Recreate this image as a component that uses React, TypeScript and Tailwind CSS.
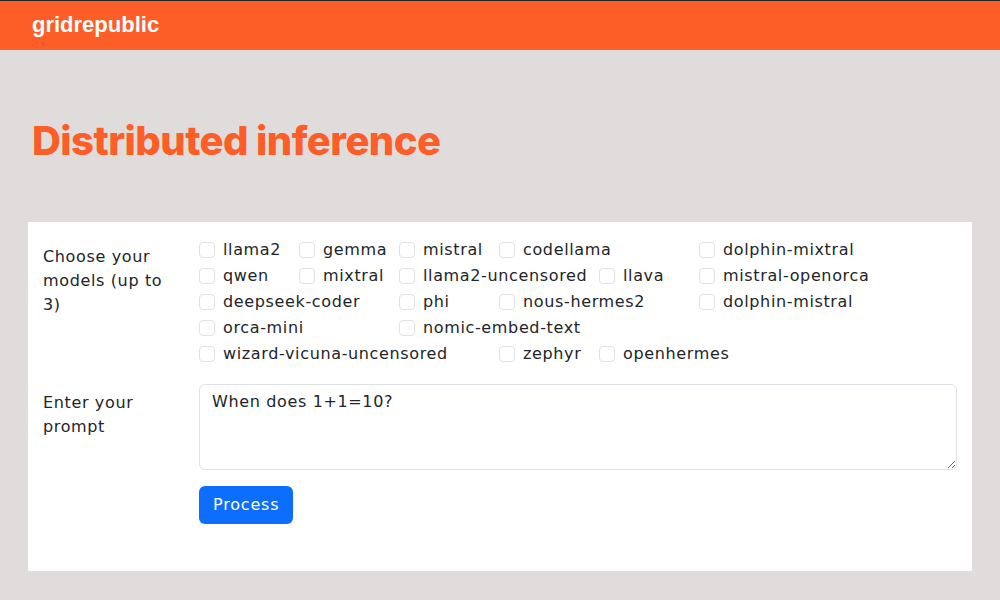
const models: { name: string; span: string }[] = [
  { name: 'llama2', span: 'col-span-1' },
  { name: 'gemma', span: 'col-span-1' },
  { name: 'mistral', span: 'col-span-1' },
  { name: 'codellama', span: 'col-span-2' },
  { name: 'dolphin-mixtral', span: 'col-span-2' },
  { name: 'qwen', span: 'col-span-1' },
  { name: 'mixtral', span: 'col-span-1' },
  { name: 'llama2-uncensored', span: 'col-span-2' },
  { name: 'llava', span: 'col-span-1' },
  { name: 'mistral-openorca', span: 'col-span-2' },
  { name: 'deepseek-coder', span: 'col-span-2' },
  { name: 'phi', span: 'col-span-1' },
  { name: 'nous-hermes2', span: 'col-span-2' },
  { name: 'dolphin-mistral', span: 'col-span-2' },
  { name: 'orca-mini', span: 'col-span-2' },
  { name: 'nomic-embed-text', span: 'col-span-3' },
  { name: 'wizard-vicuna-uncensored', span: 'col-span-3' },
  { name: 'zephyr', span: 'col-span-1' },
  { name: 'openhermes', span: 'col-span-1' },
];

const App = () => {
  return (
    <div className="min-h-[600px] bg-[#e0dcdc] font-['DejaVu_Sans',sans-serif] text-[#212529]">
      <header className="h-[50px] border-t border-[#222] bg-[#fd5d26] px-8 flex items-center">
        <span className="font-['Liberation_Sans',sans-serif] text-[22px] font-bold text-white leading-none -mt-[2px]">
          gridrepublic
        </span>
      </header>

      <section className="pt-[67px] pb-[57px] px-8">
        <h1 className="font-['Inter',sans-serif] text-[40px] leading-[48px] font-extrabold text-[#fd5d26] tracking-[-0.014em]">
          Distributed inference
        </h1>
      </section>

      <div className="mx-[28px] bg-white px-[15px] pt-[15px] pb-[47px]">
        <div className="grid grid-cols-[156px_1fr]">
          <div className="pt-[8px] pr-[28px] text-base leading-6 tracking-[0.04em]">
            Choose your models (up to 3)
          </div>
          <div className="grid grid-cols-[repeat(7,100px)]">
            {models.map((m) => (
              <label key={m.name} className={`${m.span} h-[26px] flex items-center gap-2`}>
                <span className="w-4 h-4 rounded-[4px] border border-[#dee2e6] bg-white shrink-0" />
                <span className="text-base leading-6 tracking-[0.04em] whitespace-nowrap">{m.name}</span>
              </label>
            ))}
          </div>
        </div>

        <div className="grid grid-cols-[156px_1fr] mt-[17px]">
          <div className="pt-[7px] pr-[28px] text-base leading-6 tracking-[0.04em]">
            Enter your prompt
          </div>
          <div>
            <textarea
              defaultValue="When does 1+1=10?"
              className="w-full h-[86px] block rounded-[6px] border border-[#dee2e6] px-3 py-[5px] text-base leading-6 tracking-[0.04em] text-[#212529] font-['DejaVu_Sans',sans-serif]"
            />
            <button className="mt-4 h-[38px] px-[14px] rounded-[6px] bg-[#0d6efd] text-white text-base tracking-[0.05em]">
              Process
            </button>
          </div>
        </div>
      </div>
    </div>
  );
};

export default App;
